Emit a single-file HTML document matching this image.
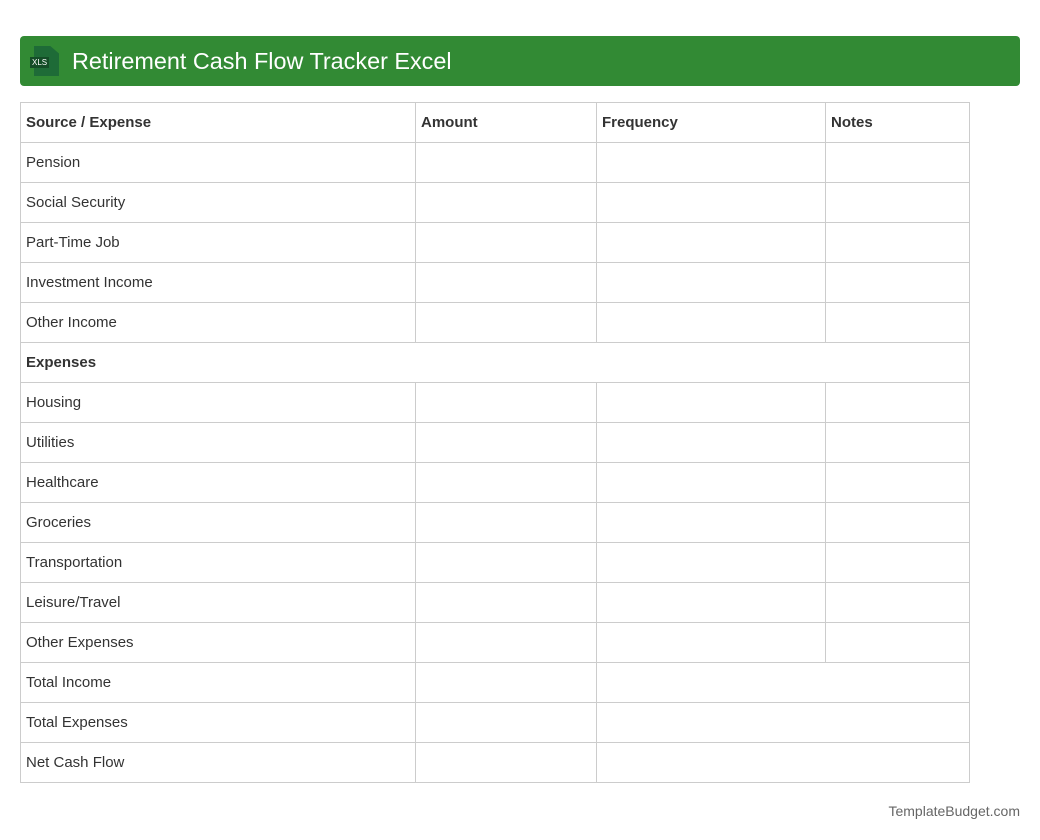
<!DOCTYPE html><html><head><style>
body{margin:0;background:#fff;font-family:"Liberation Sans",Arial,sans-serif;width:1040px;height:840px;position:relative}
.h{position:absolute;left:20px;top:36px;width:1000px;height:50px;background:#328a34;border-radius:4px}
.h span{position:absolute;left:52px;top:12px;color:#fff;font-size:23.4px}
.ic{position:absolute;left:14px;top:10px;width:25px;height:30px;background:#1e6b37;clip-path:polygon(0 0,65% 0,100% 25%,100% 100%,0 100%)}
.bd{position:absolute;left:10px;top:21px;background:#144d27;color:#fff;font-size:8px;padding:1px 2px;line-height:9px}
table{position:absolute;left:20px;top:102px;border-collapse:collapse}
td{border:1px solid #ccc;height:39px;padding:0 0 0 5px;font-size:15px;color:#333}
.b td,td.b{font-weight:bold}
.f{position:absolute;right:20px;top:803px;font-size:14px;color:#666}
</style></head><body>
<div class="h"><div class="ic"></div><div class="bd">XLS</div><span>Retirement Cash Flow Tracker Excel</span></div>
<table>
<colgroup><col style="width:395px"><col style="width:181px"><col style="width:229px"><col style="width:144px"></colgroup>
<tr class="b"><td>Source / Expense</td><td>Amount</td><td>Frequency</td><td>Notes</td></tr>
<tr><td>Pension</td><td></td><td></td><td></td></tr>
<tr><td>Social Security</td><td></td><td></td><td></td></tr>
<tr><td>Part-Time Job</td><td></td><td></td><td></td></tr>
<tr><td>Investment Income</td><td></td><td></td><td></td></tr>
<tr><td>Other Income</td><td></td><td></td><td></td></tr>
<tr><td colspan="4" class="b">Expenses</td></tr>
<tr><td>Housing</td><td></td><td></td><td></td></tr>
<tr><td>Utilities</td><td></td><td></td><td></td></tr>
<tr><td>Healthcare</td><td></td><td></td><td></td></tr>
<tr><td>Groceries</td><td></td><td></td><td></td></tr>
<tr><td>Transportation</td><td></td><td></td><td></td></tr>
<tr><td>Leisure/Travel</td><td></td><td></td><td></td></tr>
<tr><td>Other Expenses</td><td></td><td></td><td></td></tr>
<tr><td>Total Income</td><td></td><td colspan="2"></td></tr>
<tr><td>Total Expenses</td><td></td><td colspan="2"></td></tr>
<tr><td>Net Cash Flow</td><td></td><td colspan="2"></td></tr>
</table>
<div class="f">TemplateBudget.com</div>
</body></html>
